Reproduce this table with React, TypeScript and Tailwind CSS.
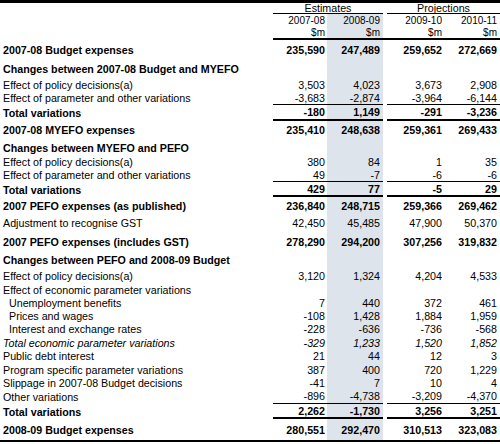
import React from "react";

type Row = {
  label: string;
  v?: string[];
  style?: "bold" | "italic" | "indent";
  h: string;
  line?: "thin" | "thick" | "bottom";
};

const rows: Row[] = [
  { label: "2007-08 Budget expenses", v: ["235,590", "247,489", "259,652", "272,669"], style: "bold", h: "h-[20px]" },
  { label: "Changes between 2007-08 Budget and MYEFO", style: "bold", h: "h-[18px]" },
  { label: "Effect of policy decisions(a)", v: ["3,503", "4,023", "3,673", "2,908"], h: "h-[13px]" },
  { label: "Effect of parameter and other variations", v: ["-3,683", "-2,874", "-3,964", "-6,144"], h: "h-[14px]", line: "thin" },
  { label: "Total variations", v: ["-180", "1,149", "-291", "-3,236"], style: "bold", h: "h-[16px]", line: "thick" },
  { label: "2007-08 MYEFO expenses", v: ["235,410", "248,638", "259,361", "269,433"], style: "bold", h: "h-[18px]" },
  { label: "Changes between MYEFO and PEFO", style: "bold", h: "h-[17px]" },
  { label: "Effect of policy decisions(a)", v: ["380", "84", "1", "35"], h: "h-[12px]" },
  { label: "Effect of parameter and other variations", v: ["49", "-7", "-6", "-6"], h: "h-[14px]", line: "thin" },
  { label: "Total variations", v: ["429", "77", "-5", "29"], style: "bold", h: "h-[15px]", line: "thick" },
  { label: "2007 PEFO expenses (as published)", v: ["236,840", "248,715", "259,366", "269,462"], style: "bold", h: "h-[17px]" },
  { label: "Adjustment to recognise GST", v: ["42,450", "45,485", "47,900", "50,370"], h: "h-[18px]" },
  { label: "2007 PEFO expenses (includes GST)", v: ["278,290", "294,200", "307,256", "319,832"], style: "bold", h: "h-[19px]" },
  { label: "Changes between PEFO and 2008-09 Budget", style: "bold", h: "h-[18px]" },
  { label: "Effect of policy decisions(a)", v: ["3,120", "1,324", "4,204", "4,533"], h: "h-[14px]" },
  { label: "Effect of economic parameter variations", h: "h-[13px]" },
  { label: "Unemployment benefits", v: ["7", "440", "372", "461"], style: "indent", h: "h-[13px]" },
  { label: "Prices and wages", v: ["-108", "1,428", "1,884", "1,959"], style: "indent", h: "h-[13px]" },
  { label: "Interest and exchange rates", v: ["-228", "-636", "-736", "-568"], style: "indent", h: "h-[14px]" },
  { label: "Total economic parameter variations", v: ["-329", "1,233", "1,520", "1,852"], style: "italic", h: "h-[13px]" },
  { label: "Public debt interest", v: ["21", "44", "12", "3"], h: "h-[14px]" },
  { label: "Program specific parameter variations", v: ["387", "400", "720", "1,229"], h: "h-[13px]" },
  { label: "Slippage in 2007-08 Budget decisions", v: ["-41", "7", "10", "4"], h: "h-[13px]" },
  { label: "Other variations", v: ["-896", "-4,738", "-3,209", "-4,370"], h: "h-[15px]", line: "thin" },
  { label: "Total variations", v: ["2,262", "-1,730", "3,256", "3,251"], style: "bold", h: "h-[15px]", line: "thick" },
  { label: "2008-09 Budget expenses", v: ["280,551", "292,470", "310,513", "323,083"], style: "bold", h: "h-[23px]", line: "bottom" },
];

// column widths and right padding, left to right
const cols = [
  "w-[54px] pr-[2px]",
  "w-[56px] pr-[3px] bg-[#dde4ec]",
  "w-[57px] pr-[2px]",
  "w-[56px] pr-[3px]",
];

function BudgetRow({ row }: { row: Row }) {
  const font =
    row.style === "bold" ? "font-bold" : row.style === "italic" ? "italic" : "";
  const cellLine =
    row.line === "thin" ? "border-b border-black" : row.line === "thick" ? "border-b-2 border-black" : "";
  const v = row.v ?? ["", "", "", ""];

  return (
    <div className={`flex ${row.h} ${font} ${row.line === "bottom" ? "border-b-2 border-black" : ""}`}>
      <div className={`w-[273px] flex items-center ${row.style === "indent" ? "pl-[9px]" : "pl-[3px]"}`}>
        {row.label}
      </div>
      {v.map((n, i) => (
        <React.Fragment key={i}>
          {i === 2 && <div className="w-[4px]" />}
          <div className={`${cols[i]} ${cellLine} flex items-center justify-end`}>{n}</div>
        </React.Fragment>
      ))}
    </div>
  );
}

export default function App() {
  return (
    <div className="w-[500px] h-[444px] bg-white text-black text-[10.7px] leading-[12px] font-['Liberation_Sans',Arial,sans-serif]">
      <div className="border-t-[3px] border-black">
        {/* group headings */}
        <div className="flex h-[11px] leading-[10px]">
          <div className="w-[273px]" />
          <div className="w-[110px] border-b border-black flex items-center justify-center">Estimates</div>
          <div className="w-[4px]" />
          <div className="w-[113px] border-b border-black flex items-center justify-center">Projections</div>
        </div>
        <div className="flex h-[13px] text-[10px]">
          <div className="w-[273px]" />
          <div className="w-[54px] pr-[2px] flex items-center justify-end">2007-08</div>
          <div className="w-[56px] pr-[3px] bg-[#dde4ec] flex items-center justify-end">2008-09</div>
          <div className="w-[4px]" />
          <div className="w-[57px] pr-[2px] flex items-center justify-end">2009-10</div>
          <div className="w-[56px] pr-[3px] flex items-center justify-end">2010-11</div>
        </div>
        <div className="flex h-[13px] text-[10px]">
          <div className="w-[273px]" />
          <div className="w-[54px] pr-[2px] border-b-2 border-black flex items-center justify-end">$m</div>
          <div className="w-[56px] pr-[3px] bg-[#dde4ec] border-b-2 border-black flex items-center justify-end">$m</div>
          <div className="w-[4px] border-b-2 border-black" />
          <div className="w-[57px] pr-[2px] border-b-2 border-black flex items-center justify-end">$m</div>
          <div className="w-[56px] pr-[3px] border-b-2 border-black flex items-center justify-end">$m</div>
        </div>
        {rows.map((r, i) => (
          <BudgetRow key={i} row={r} />
        ))}
      </div>
    </div>
  );
}
